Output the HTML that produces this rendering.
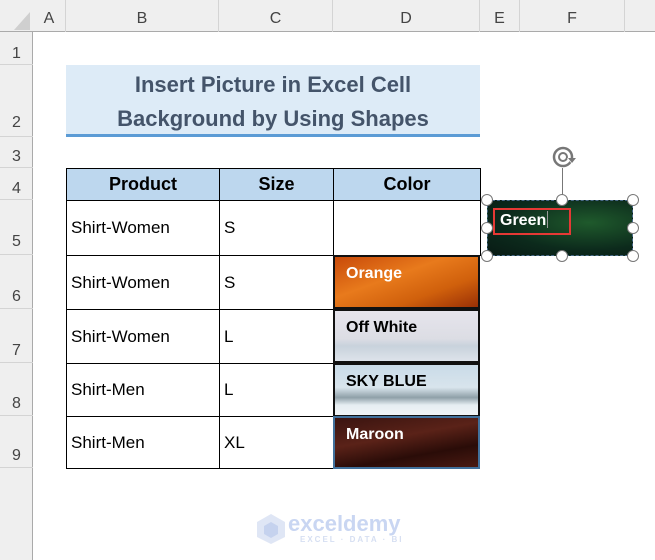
<!DOCTYPE html><html><head><style>
*{margin:0;padding:0;box-sizing:border-box}
body{width:655px;height:560px;overflow:hidden;background:#fff;position:relative;font-family:"Liberation Sans",sans-serif}
.a{position:absolute}
.ch{position:absolute;top:0;height:32px;line-height:38px;text-align:center;color:#444;font-size:16px;border-right:1px solid #d4d4d4}
.rh{position:absolute;left:0;width:33px;text-align:center;color:#444;font-size:16px;border-bottom:1px solid #d4d4d4}
.c{position:absolute;border:1px solid #000;font-size:17px;color:#000;padding-left:4px;display:flex;align-items:center;white-space:nowrap}
.h{background:#BDD7EE;font-weight:bold;justify-content:center;padding:0;font-size:18px}
.img{position:absolute;left:333px;width:147px;font-weight:bold;font-size:16px;padding:8px 0 0 11px;border:2px solid #111}
.hd{position:absolute;width:12px;height:12px;border-radius:50%;background:#fff;border:1.5px solid #777}
</style></head><body>
<div class="a" style="left:0;top:0;width:655px;height:32px;background:#efefef;border-bottom:1px solid #aaa"></div>
<div class="a" style="left:0;top:32px;width:33px;height:528px;background:#efefef;border-right:1px solid #aaa"></div>
<svg class="a" style="left:14px;top:12px" width="16" height="18"><polygon points="16,0 16,18 0,18" fill="#cfcfcf"/></svg>
<div class="ch" style="left:33px;width:33px">A</div>
<div class="ch" style="left:66px;width:153px">B</div>
<div class="ch" style="left:219px;width:114px">C</div>
<div class="ch" style="left:333px;width:147px">D</div>
<div class="ch" style="left:480px;width:40px">E</div>
<div class="ch" style="left:520px;width:105px">F</div>
<div class="rh" style="top:32px;height:33px;line-height:44px">1</div>
<div class="rh" style="top:65px;height:72px;line-height:116px">2</div>
<div class="rh" style="top:137px;height:31px;line-height:40px">3</div>
<div class="rh" style="top:168px;height:32px;line-height:42px">4</div>
<div class="rh" style="top:200px;height:55px;line-height:84px">5</div>
<div class="rh" style="top:255px;height:54px;line-height:84px">6</div>
<div class="rh" style="top:309px;height:54px;line-height:84px">7</div>
<div class="rh" style="top:363px;height:53px;line-height:82px">8</div>
<div class="rh" style="top:416px;height:52px;line-height:80px">9</div>

<div class="a" style="left:66px;top:65px;width:414px;height:72px;background:#DDEBF7;border-bottom:3px solid #5B9BD5;text-align:center;color:#44546A;font-weight:bold;font-size:22px;line-height:34px;padding-top:3px">Insert Picture in Excel Cell<br>Background by Using Shapes</div>

<div class="c h" style="left:66px;top:168px;width:154px;height:33px">Product</div>
<div class="c h" style="left:219px;top:168px;width:115px;height:33px">Size</div>
<div class="c h" style="left:333px;top:168px;width:148px;height:33px">Color</div>

<div class="c" style="left:66px;top:200px;width:154px;height:56px">Shirt-Women</div>
<div class="c" style="left:219px;top:200px;width:115px;height:56px">S</div>
<div class="c" style="left:333px;top:200px;width:148px;height:56px"></div>
<div class="c" style="left:66px;top:255px;width:154px;height:55px">Shirt-Women</div>
<div class="c" style="left:219px;top:255px;width:115px;height:55px">S</div>
<div class="c" style="left:66px;top:309px;width:154px;height:55px">Shirt-Women</div>
<div class="c" style="left:219px;top:309px;width:115px;height:55px">L</div>
<div class="c" style="left:66px;top:363px;width:154px;height:54px">Shirt-Men</div>
<div class="c" style="left:219px;top:363px;width:115px;height:54px">L</div>
<div class="c" style="left:66px;top:416px;width:154px;height:53px">Shirt-Men</div>
<div class="c" style="left:219px;top:416px;width:115px;height:53px">XL</div>

<div class="img" style="top:255px;height:54px;color:#fff;background:linear-gradient(160deg,#c84a0a,#e87a1c 40%,#d0600c 70%,#9a3006)">Orange</div>
<div class="img" style="top:309px;height:54px;color:#000;background:linear-gradient(180deg,#e6e4ec,#dcdde4 55%,#c8d2dc 70%,#dde3ea)">Off White</div>
<div class="img" style="top:363px;height:54px;color:#000;background:linear-gradient(180deg,#c9dbe8,#d8e4ec 45%,#8fa0a8 65%,#e6eef2 80%,#f0f4f6)">SKY BLUE</div>
<div class="img" style="top:416px;height:53px;color:#fff;background:linear-gradient(170deg,#3a1410,#5a2218 40%,#2a0c08 70%,#4a1a12);border-color:#41719C">Maroon</div>

<div class="a" style="left:487px;top:200px;width:146px;height:56px;background:radial-gradient(ellipse at 70% 40%,#1f5a2c,#0c2a1c 60%,#081a14);border:1px dashed #4a6a8a"></div>
<div class="a" style="left:493px;top:208px;width:78px;height:27px;border:2px solid #e53935;color:#fff;font-weight:bold;font-size:16px;padding:1px 0 0 5px">Green<span style="display:inline-block;width:1px;height:17px;background:#999;vertical-align:-3px;margin-left:1px"></span></div>
<div class="a" style="left:562px;top:168px;width:1px;height:32px;background:#777"></div>
<svg class="a" style="left:550px;top:144px" width="28" height="26" viewBox="0 0 28 26"><circle cx="13" cy="13" r="9" fill="none" stroke="#777" stroke-width="2.5"/><circle cx="13" cy="13" r="4" fill="none" stroke="#777" stroke-width="2"/><polygon points="17,14 27,14 22,20" fill="#fff"/><polygon points="18,14 26,14 22,19" fill="#777"/></svg>
<div class="hd" style="left:481px;top:194px"></div><div class="hd" style="left:556px;top:194px"></div><div class="hd" style="left:627px;top:194px"></div>
<div class="hd" style="left:481px;top:222px"></div><div class="hd" style="left:627px;top:222px"></div>
<div class="hd" style="left:481px;top:250px"></div><div class="hd" style="left:556px;top:250px"></div><div class="hd" style="left:627px;top:250px"></div>

<svg class="a" style="left:256px;top:513px" width="30" height="32"><polygon points="15,1 29,9 29,24 15,31 1,24 1,9" fill="#dfe6f5"/><polygon points="15,9 22,13 22,21 15,25 8,21 8,13" fill="#c5d2ee"/></svg>
<div class="a" style="left:288px;top:511px;color:#c9d6f2;font-size:22px;font-weight:bold">exceldemy</div>
<div class="a" style="left:300px;top:535px;color:#d6dff2;font-size:8px;letter-spacing:2px;font-weight:bold">EXCEL · DATA · BI</div>
</body></html>
